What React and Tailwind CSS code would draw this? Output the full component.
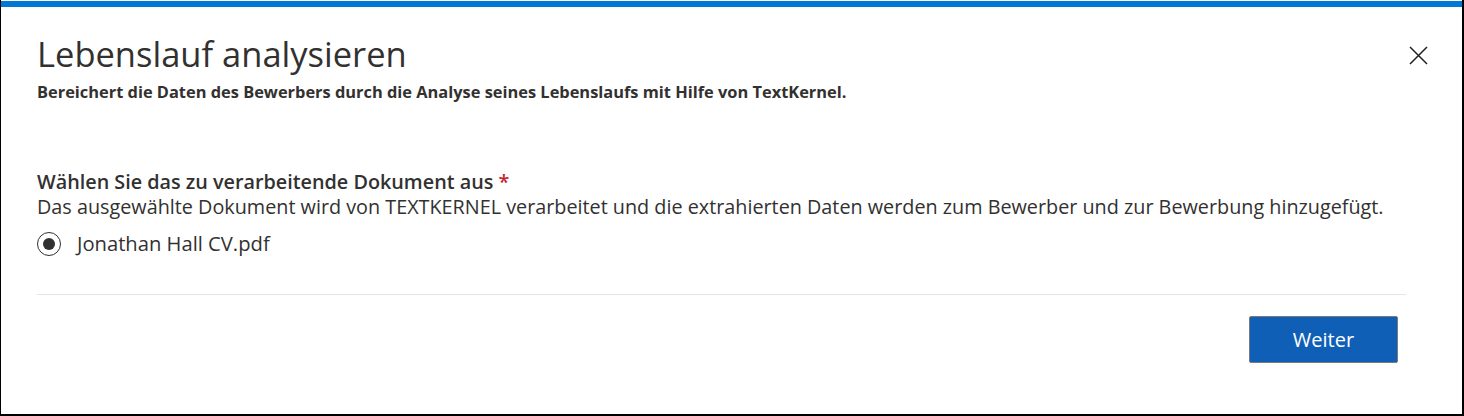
import { useState } from "react";

const App = () => {
    const [selected, setSelected] = useState("cv");

    return (
        <div className="w-[1464px] h-[416px] bg-white border-l border-r-2 border-b-2 border-black flex flex-col font-['Open_Sans',sans-serif] text-[#323130]">
            <div className="h-[6px] mt-px bg-[#0078d4]" />

            <div className="flex-1 flex flex-col pl-[36px] pr-[56px]">
                {/* cabecera */}
                <div className="flex items-start justify-between pt-[25px]">
                    <div>
                        <h2 className="text-[34.5px] leading-[44px] font-normal text-[#323130]">Lebenslauf analysieren</h2>
                        <p className="text-[16.4px] leading-[22px] font-bold mt-[5px]">Bereichert die Daten des Bewerbers durch die Analyse seines Lebenslaufs mit Hilfe von TextKernel.</p>
                    </div>
                    <button className="mt-[13px] -mr-[22px] w-[20px] h-[20px] flex items-center justify-center text-[#201f1e]">
                        <svg width="19" height="19" viewBox="0 0 19 19" fill="none" stroke="currentColor" strokeWidth="1.5">
                            <path d="M1 1 L18 18 M18 1 L1 18" />
                        </svg>
                    </button>
                </div>

                {/* seleccion de documento */}
                <div className="mt-[66px]">
                    <label className="block text-[19.8px] leading-[25px] font-semibold">
                        Wählen Sie das zu verarbeitende Dokument aus <span className="text-[#c4262c]">*</span>
                    </label>
                    <p className="text-[19.8px] leading-[25px]">Das ausgewählte Dokument wird von TEXTKERNEL verarbeitet und die extrahierten Daten werden zum Bewerber und zur Bewerbung hinzugefügt.</p>

                    <label className="flex items-center gap-[16px] mt-[12px] cursor-pointer" onClick={() => setSelected("cv")}>
                        <span className="w-[24px] h-[24px] rounded-full border border-[#323130] flex items-center justify-center">
                            {selected === "cv" && <span className="w-[12px] h-[12px] rounded-full bg-[#323130]" />}
                        </span>
                        <span className="text-[20.2px] leading-[25px]">Jonathan Hall CV.pdf</span>
                    </label>
                </div>

                <div className="mt-[38px] h-px bg-[#e5e5e5]" />

                <div className="flex justify-end mt-[21px] pr-[8px]">
                    <button className="w-[149px] h-[47px] bg-[#0f5fb7] border border-[#7a7a7a] rounded-[2px] text-white text-[20px] leading-[24px] pt-px">
                        Weiter
                    </button>
                </div>
            </div>
        </div>
    )
}

export default App
